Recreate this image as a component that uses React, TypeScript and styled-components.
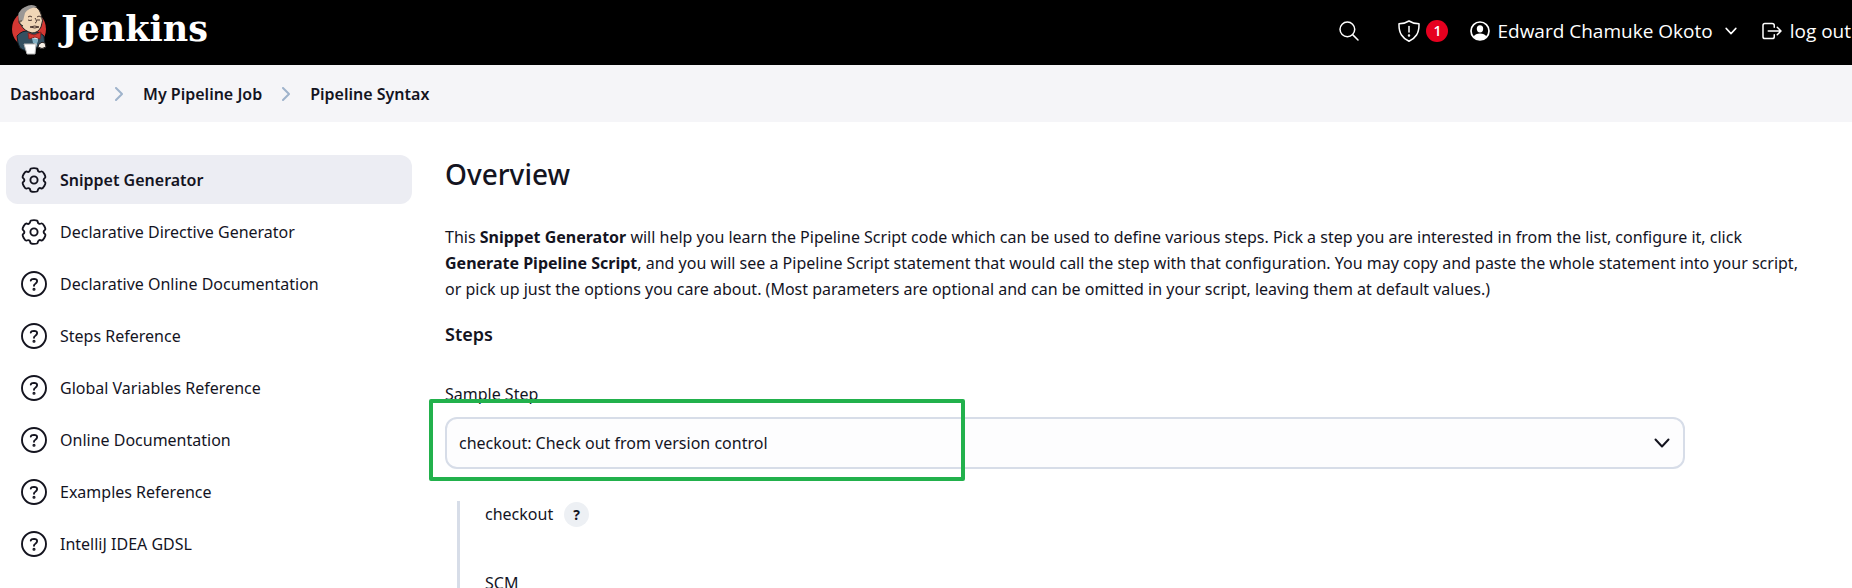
import React from "react";
import styled, { createGlobalStyle } from "styled-components";
import { IoLogOutOutline, IoSearchOutline } from "react-icons/io5";

const GlobalStyle = createGlobalStyle`
  *, *::before, *::after { box-sizing: border-box; }
  body {
    margin: 0;
    background: #fff;
    color: #14141f;
    font: 400 16px/26px "Noto Sans", "Open Sans", sans-serif;
  }
  a { color: inherit; text-decoration: none; }
  svg { display: block; flex: none; }
`;

const Page = styled.div`
  height: 100vh;
  overflow: auto;
  scrollbar-width: none;
`;

const Header = styled.header`
  display: flex;
  align-items: center;
  justify-content: space-between;
  height: 65px;
  padding: 0 1px 0 10px;
  background: #000;
  color: #fff;
`;

const Brand = styled.a`
  display: flex;
  align-items: center;
  gap: 13px;
  height: 58px;
  align-self: flex-start;
  font: 700 35px/40px "DejaVu Serif", serif;
`;

const HeaderTools = styled.div`
  display: flex;
  align-items: center;
  padding-bottom: 4px;
  font-family: "Open Sans", "Noto Sans", sans-serif;
  font-size: 19px;
  white-space: nowrap;
`;

const IconButton = styled.button`
  display: flex;
  padding: 0;
  margin-right: 37px;
  border: 0;
  background: none;
  color: inherit;
`;

const HeaderLink = styled.a<{ $gap: number; $after: number }>`
  display: flex;
  align-items: center;
  gap: ${(p) => p.$gap}px;
  margin-right: ${(p) => p.$after}px;
`;

const Badge = styled.span`
  width: 22px;
  height: 22px;
  border-radius: 50%;
  background: #e6001f;
  font-size: 14px;
  font-weight: 600;
  line-height: 22px;
  text-align: center;
`;

const Breadcrumbs = styled.nav`
  display: flex;
  align-items: center;
  gap: 20px;
  height: 57px;
  padding-left: 10px;
  background: #f5f5f8;
  font-weight: 600;
`;

const Columns = styled.div`
  display: flex;
  align-items: flex-start;
  gap: 33px;
  padding: 33px 14px 0 6px;
`;

const Tasks = styled.nav`
  display: flex;
  flex: none;
  flex-direction: column;
  gap: 3px;
  width: 406px;
`;

const Task = styled.a<{ $active?: boolean }>`
  display: flex;
  align-items: center;
  gap: 12px;
  height: 49px;
  padding-left: 13px;
  border-radius: 12px;
  background: ${(p) => (p.$active ? "#ecedf3" : "transparent")};
  font-weight: ${(p) => (p.$active ? 600 : 400)};
`;

const TaskIcon = styled.span`
  display: flex;
  justify-content: center;
  width: 29px;
`;

const Main = styled.main`
  flex: 1;
  min-width: 0;
`;

const Title = styled.h1`
  margin: 0;
  font-size: 28px;
  font-weight: 500;
  line-height: 38px;
`;

const Intro = styled.p`
  margin: 31px 0 0;
  padding-right: 24px;

  strong { white-space: nowrap; }
`;

const Heading = styled.h2`
  margin: 19px 0 0;
  font-size: 18px;
  font-weight: 600;
  line-height: 26px;
`;

const Field = styled.div`
  position: relative;
  width: 89%;
  margin-top: 34px;
`;

const Label = styled.label`
  display: block;
`;

const SelectBox = styled.div`
  display: grid;
  align-items: center;
  margin-top: 10px;

  > * { grid-area: 1 / 1; }
  > svg { justify-self: end; margin-right: 15px; pointer-events: none; }
`;

const Select = styled.select`
  appearance: none;
  width: 100%;
  height: 52px;
  padding: 0 40px 0 12px;
  border: 2px solid #d7dde8;
  border-radius: 12px;
  background: #fdfdfe;
  color: inherit;
  font: inherit;
`;

const Highlight = styled.div`
  position: absolute;
  top: 18px;
  left: -16px;
  width: 536px;
  height: 82px;
  border: 4px solid #22b14c;
  border-radius: 2px;
  pointer-events: none;
`;

const StepBody = styled.section`
  display: flex;
  flex-direction: column;
  gap: 43px;
  min-height: 240px;
  margin: 32px 0 0 12px;
  padding-left: 25px;
  border-left: 3px solid #d7dde8;
`;

const StepRow = styled.div`
  display: flex;
  align-items: center;
  gap: 11px;
`;

const HelpButton = styled.button`
  width: 25px;
  height: 25px;
  padding: 0;
  border: 0;
  border-radius: 50%;
  background: #edf0f4;
  color: inherit;
  font: inherit;
  font-size: 14px;
  font-weight: 700;
  line-height: 25px;
`;

const Butler = () => (
  <svg width="38" height="52" viewBox="0 0 38 52" aria-hidden="true">
    <ellipse cx="19" cy="26" rx="17" ry="18" fill="#d33833" />
    <path d="M7 33 Q12 27 20 28 Q29 28 34 33 L35 43 Q30 46 27 44 L25 48 Q15 49 10 45 L8 40 Z" fill="#335061" stroke="#111b22" />
    <path d="M9 15 Q8 5 18 4 Q28 1 31 11 Q34 18 31 24 Q28 30 22 30 Q14 28 11 22 Q8 20 9 15 Z" fill="#f0d6b7" stroke="#231f20" />
    <path d="M9 18 Q6 8 15 4 Q22 0 27 4 Q18 5 15 10 L13 18 Q10 16 9 18 Z" fill="#9a9795" />
    <path d="M12 18 Q9 17 10 21 L13 23" fill="#f0d6b7" stroke="#231f20" />
    <path d="M18 14 Q20 12 22 14 M27 14 Q29 12 31 14 M18 17 Q20 18 22 17 M27 17 L30 17 M25 15 Q28 19 25 20 M20 24 Q25 22 29 24 Q25 26 20 24" fill="none" stroke="#49352f" />
    <path d="M21 32 L26 44 L29 32 Z" fill="#fff" />
    <path d="M18 30 L24 32 L31 29 L30 36 L25 34 L19 36 Z" fill="#d33833" stroke="#8d2422" />
    <path d="M22 35 L28 36 L27 41 L23 40 Z" fill="#81b0c4" />
    <path d="M14 41 L26 41 L25 51 L17 51 Z" fill="#fff" stroke="#b8b8b8" />
    <path d="M29 41 Q32 38 35 40 L36 44 Q32 47 28 44 Z" fill="#f7efe5" stroke="#231f20" />
  </svg>
);

const Shield = () => (
  <svg width="22" height="22" viewBox="0 0 22 22" fill="none" stroke="currentColor" strokeWidth="1.5" strokeLinecap="round" strokeLinejoin="round" aria-hidden="true">
    <path d="M11 1 Q7 3.600 1 3.800 Q0.800 11 3.500 15 Q6 19 11 21.200 Q16 19 18.500 15 Q21.200 11 21 3.800 Q15 3.600 11 1 Z" />
    <path d="M11 6.500 V12" />
    <circle cx="11" cy="15.500" r="0.500" fill="currentColor" />
  </svg>
);

const Person = () => (
  <svg width="20" height="20" viewBox="0 0 20 20" aria-hidden="true">
    <circle cx="10" cy="10" r="9" fill="none" stroke="currentColor" strokeWidth="1.700" />
    <ellipse cx="10" cy="7.800" rx="3.200" ry="3.600" fill="currentColor" />
    <path d="M3.500 15.500 Q5.500 12.600 10 12.600 Q14.500 12.600 16.500 15.500 Q14 19 10 19 Q6 19 3.500 15.500 Z" fill="currentColor" />
  </svg>
);

const Chevron = ({ size, weight }: { size: number; weight: number }) => (
  <svg width={size} height={size} viewBox="0 0 16 16" fill="none" stroke="currentColor" strokeWidth={weight} strokeLinecap="round" strokeLinejoin="round" aria-hidden="true">
    <path d="M1.500 4.500 L8 11.500 L14.500 4.500" />
  </svg>
);

const CrumbArrow = () => (
  <svg width="8" height="14" viewBox="0 0 8 14" fill="none" stroke="#9fb3cc" strokeWidth="2" strokeLinecap="round" strokeLinejoin="round" aria-hidden="true">
    <path d="M1 1 L7 7 L1 13" />
  </svg>
);

const Help = () => (
  <svg width="26" height="26" viewBox="0 0 26 26" fill="none" stroke="currentColor" strokeWidth="1.900" strokeLinecap="round" strokeLinejoin="round" aria-hidden="true">
    <circle cx="13" cy="13" r="12" />
    <path d="M9.800 9.600 Q10.200 7.900 13 7.900 Q16.200 8 16.100 10.300 Q16 11.700 14.400 12.700 Q13 13.500 13 14.800" />
    <circle cx="13" cy="18.200" r="0.600" fill="currentColor" />
  </svg>
);

// Six broad teeth with shallow rounded notches between them.
const polar = (radius: number, degrees: number) => {
  const a = (degrees * Math.PI) / 180;
  return [13 + radius * Math.sin(a), 13 - radius * Math.cos(a)];
};
const toothPoints = [0, 60, 120, 180, 240, 300].flatMap((a) => [
  polar(12.4, a - 17),
  polar(12.4, a + 17),
  polar(9.6, a + 23),
  polar(9.9, a + 37),
]);
const gearPath =
  toothPoints
    .map(([x, y], i) => {
      const [nx, ny] = toothPoints[(i + 1) % toothPoints.length];
      const mid = `${(x + nx) / 2} ${(y + ny) / 2}`;
      return i === 0 ? `M${mid}` : `Q${x} ${y} ${mid}`;
    })
    .join(" ") +
  ` Q${toothPoints[0].join(" ")} ${(toothPoints[0][0] + toothPoints[1][0]) / 2} ${(toothPoints[0][1] + toothPoints[1][1]) / 2} Z`;

const Gear = () => (
  <svg width="26" height="26" viewBox="0 0 26 26" fill="none" stroke="currentColor" strokeWidth="1.900" strokeLinejoin="round" aria-hidden="true">
    <path d={gearPath} />
    <circle cx="13" cy="13" r="3.600" />
  </svg>
);

const tasks = [
  { text: "Snippet Generator", gear: true, active: true },
  { text: "Declarative Directive Generator", gear: true },
  { text: "Declarative Online Documentation" },
  { text: "Steps Reference" },
  { text: "Global Variables Reference" },
  { text: "Online Documentation" },
  { text: "Examples Reference" },
  { text: "IntelliJ IDEA GDSL" },
];

export default function App() {
  return (
    <Page>
      <GlobalStyle />
      <Header>
        <Brand href="#">
          <Butler />
          Jenkins
        </Brand>
        <HeaderTools>
          <IconButton aria-label="Search">
            <IoSearchOutline size={24} />
          </IconButton>
          <HeaderLink href="#" $gap={6} $after={22} aria-label="Security warnings">
            <Shield />
            <Badge>1</Badge>
          </HeaderLink>
          <HeaderLink href="#" $gap={7} $after={12}>
            <Person />
            Edward Chamuke Okoto
          </HeaderLink>
          <HeaderLink href="#" $gap={0} $after={23} aria-label="User menu">
            <Chevron size={12} weight={2} />
          </HeaderLink>
          <HeaderLink href="#" $gap={6} $after={0}>
            <IoLogOutOutline size={24} />
            log out
          </HeaderLink>
        </HeaderTools>
      </Header>
      <Breadcrumbs aria-label="Breadcrumb">
        <a href="#">Dashboard</a>
        <CrumbArrow />
        <a href="#">My Pipeline Job</a>
        <CrumbArrow />
        <a href="#">Pipeline Syntax</a>
      </Breadcrumbs>
      <Columns>
        <Tasks aria-label="Tasks">
          {tasks.map((t) => (
            <Task key={t.text} href="#" $active={t.active}>
              <TaskIcon>{t.gear ? <Gear /> : <Help />}</TaskIcon>
              {t.text}
            </Task>
          ))}
        </Tasks>
        <Main>
          <Title>Overview</Title>
          <Intro>
            This <strong>Snippet Generator</strong> will help you learn the Pipeline Script code which can be used to
            define various steps. Pick a step you are interested in from the list, configure it, click{" "}
            <strong>Generate Pipeline Script</strong>, and you will see a Pipeline Script statement that would call the
            step with that configuration. You may copy and paste the whole statement into your script, or pick up just
            the options you care about. (Most parameters are optional and can be omitted in your script, leaving them
            at default values.)
          </Intro>
          <Heading>Steps</Heading>
          <Field>
            <Label htmlFor="sample-step">Sample Step</Label>
            <SelectBox>
              <Select id="sample-step">
                <option>checkout: Check out from version control</option>
              </Select>
              <Chevron size={16} weight={2} />
            </SelectBox>
            <Highlight />
          </Field>
          <StepBody>
            <StepRow>
              checkout
              <HelpButton aria-label="Help for checkout">?</HelpButton>
            </StepRow>
            <StepRow>SCM</StepRow>
          </StepBody>
        </Main>
      </Columns>
    </Page>
  );
}
